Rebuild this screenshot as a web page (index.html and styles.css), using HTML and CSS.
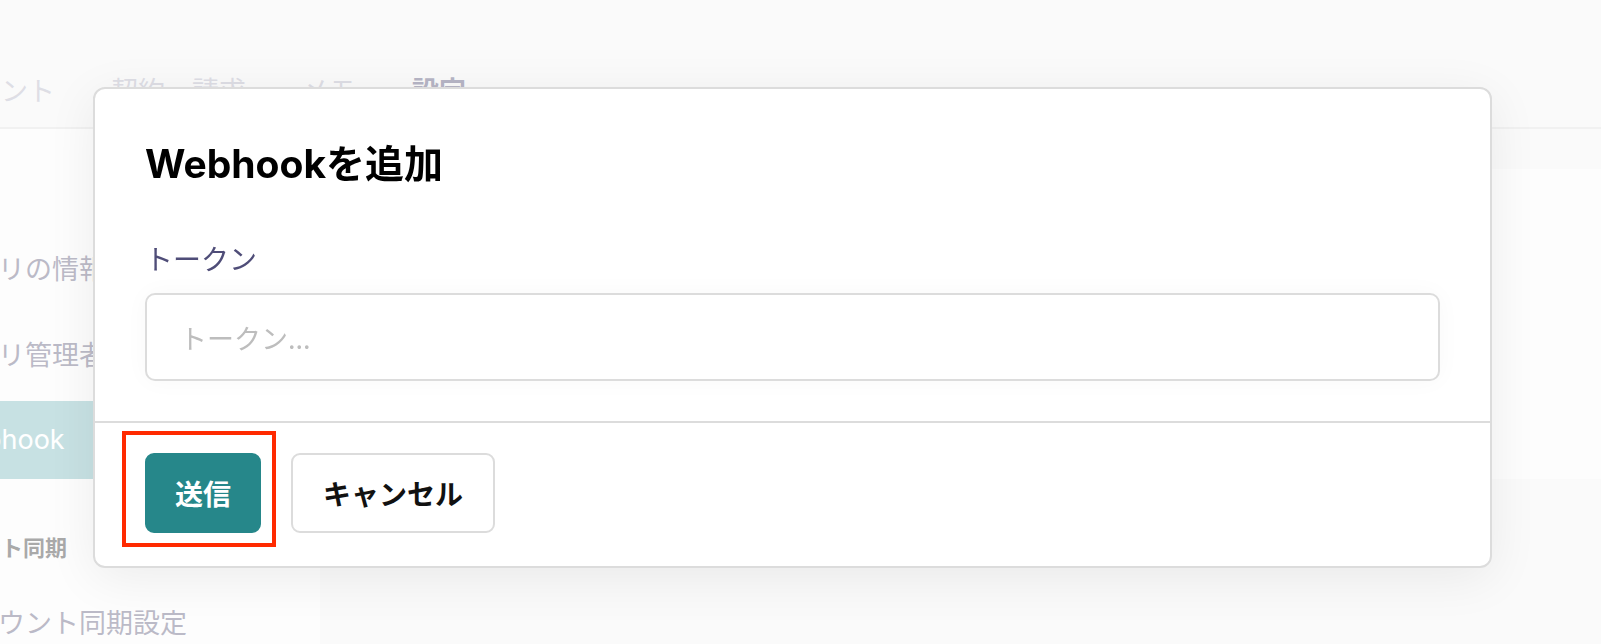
FILE: index.html
```html
<!DOCTYPE html>
<html lang="ja">
<head>
<meta charset="utf-8">
<title>Webhookを追加</title>
<link rel="stylesheet" href="styles.css">
</head>
<body>
<div class="page">
  <header class="tabbar">
    <span class="tab">アカウント</span>
    <span class="tab">契約・請求</span>
    <span class="tab">メモ</span>
    <span class="tab tab-active">設定</span>
  </header>
  <div class="main">
    <aside class="sidebar">
      <div class="side-item">アプリの情報</div>
      <div class="side-item">アプリ管理者</div>
      <div class="side-item side-item-active">Webhook</div>
      <div class="side-head">アカウント同期</div>
      <div class="side-item">アカウント同期設定</div>
    </aside>
    <section class="content">
      <div class="card"></div>
    </section>
  </div>
</div>
<div class="overlay">
  <div class="modal">
    <div class="modal-body">
      <h2 class="modal-title">Webhookを追加</h2>
      <label class="field-label" for="token">トークン</label>
      <input class="field-input" id="token" type="text" placeholder="トークン...">
    </div>
    <div class="modal-footer">
      <span class="highlight-wrap">
        <button class="btn btn-primary">送信</button>
        <span class="annotation"></span>
      </span>
      <button class="btn btn-secondary">キャンセル</button>
    </div>
  </div>
</div>
</body>
</html>
```
FILE: styles.css
```css
* { box-sizing: border-box; }

html, body {
  margin: 0;
  width: 1601px;
  height: 644px;
  overflow: hidden;
}

body {
  font-family: "Inter", "Noto Sans CJK JP", sans-serif;
  background: #fbfbfb;
}

.page {
  height: 644px;
  overflow: hidden;
}

/* ---------- background page ---------- */
.tabbar {
  height: 129px;
  background: #f5f5f5;
  border-bottom: 2px solid #e2e2e2;
  display: flex;
  gap: 56px;
  margin-left: -80px;
  padding-top: 70px;
}

.tab {
  font-family: "Noto Sans CJK JP", sans-serif;
  font-size: 27px;
  line-height: 40px;
  color: #bcbccb;
}

.tab-active {
  font-weight: 700;
  color: #6d6b8b;
}

.main {
  display: flex;
  height: 515px;
}

.sidebar {
  width: 420px;
  margin-left: -100px;
  background: #fbfbfb;
  padding-top: 100px;
  display: flex;
  flex-direction: column;
  gap: 8px;
}

.side-item {
  height: 78px;
  line-height: 78px;
  padding-left: 44px;
  font-family: "Noto Sans CJK JP", sans-serif;
  font-size: 27px;
  color: #77758f;
  white-space: nowrap;
}

.side-item-active {
  background: #8fc3c7;
  color: #ffffff;
  font-family: "Inter", "Noto Sans CJK JP", sans-serif;
}

.side-head {
  margin-top: 44px;
  margin-bottom: 14px;
  padding-left: 13px;
  line-height: 30px;
  font-family: "Noto Sans CJK JP", sans-serif;
  font-size: 22px;
  font-weight: 700;
  color: #525252;
  white-space: nowrap;
}

.content {
  flex: 1;
  background: #f5f5f5;
  padding-top: 40px;
}

.card {
  height: 310px;
  background: #fbfbfb;
}

/* ---------- overlay + modal ---------- */
.overlay {
  position: fixed;
  inset: 0;
  background: rgba(255, 255, 255, 0.5);
}

.modal {
  position: absolute;
  top: 87px;
  left: 93px;
  width: 1399px;
  background: #ffffff;
  border: 2px solid #dcdcdc;
  border-radius: 12px;
  box-shadow: 0 10px 50px rgba(0, 0, 0, 0.07);
}

.modal-body {
  padding: 52px 50px 40px;
  display: flex;
  flex-direction: column;
}

.modal-title {
  margin: 0;
  font-size: 39px;
  line-height: 46px;
  font-weight: 700;
  color: #000000;
}

.field-label {
  margin-top: 51px;
  font-family: "Noto Sans CJK JP", sans-serif;
  font-size: 28px;
  line-height: 40px;
  color: #4f4d78;
}

.field-input {
  margin-top: 15px;
  height: 88px;
  width: 100%;
  border: 2px solid #dcdcdc;
  border-radius: 10px;
  padding: 0 33px;
  font-family: "Noto Sans CJK JP", sans-serif;
  font-size: 27px;
  color: #222;
  background: #fff;
  box-shadow: 0 0 24px rgba(0, 0, 0, 0.03);
  outline: none;
}

.field-input::placeholder {
  color: #bdbdbd;
}

.modal-footer {
  border-top: 2px solid #dcdcdc;
  padding: 30px 50px 33px;
  display: flex;
  gap: 30px;
}

.highlight-wrap {
  position: relative;
  display: flex;
}

.btn {
  height: 80px;
  border-radius: 9px;
  border: 2px solid transparent;
  padding: 0 28px;
  font-family: "Noto Sans CJK JP", sans-serif;
  font-size: 28px;
  font-weight: 700;
  cursor: pointer;
}

.btn-primary {
  background: #26878a;
  border-color: #26878a;
  color: #ffffff;
}

.btn-secondary {
  background: #ffffff;
  border-color: #dcdcdc;
  color: #111111;
  padding: 0 30px;
}

.annotation {
  position: absolute;
  left: -23px;
  top: -22px;
  right: -15px;
  bottom: -14px;
  border: 4px solid #ff2a00;
  pointer-events: none;
}
```
